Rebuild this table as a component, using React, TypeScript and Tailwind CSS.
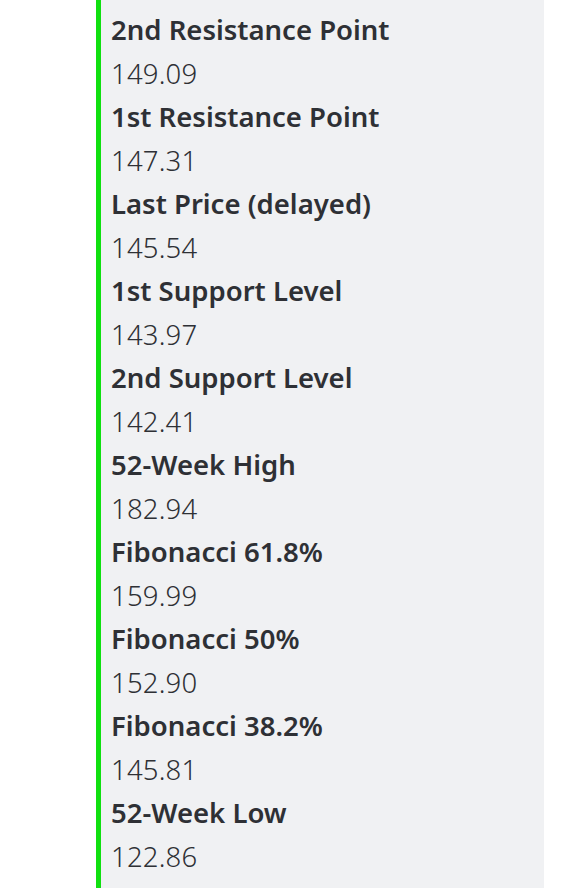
import React from "react";

const rows: [string, string][] = [
  ["2nd Resistance Point", "149.09"],
  ["1st Resistance Point", "147.31"],
  ["Last Price (delayed)", "145.54"],
  ["1st Support Level", "143.97"],
  ["2nd Support Level", "142.41"],
  ["52-Week High", "182.94"],
  ["Fibonacci 61.8%", "159.99"],
  ["Fibonacci 50%", "152.90"],
  ["Fibonacci 38.2%", "145.81"],
  ["52-Week Low", "122.86"],
];

export default function App() {
  return (
    <div className="w-[562px] h-[888px] bg-white overflow-hidden" style={{ fontFamily: "'Noto Sans', sans-serif" }}>
      <div className="ml-[96px] w-[448px] h-[888px] border-l-[5px] border-[#10e010] bg-[#f0f1f3] pl-[10px] pt-[8px] text-[#2e3035]">
        {rows.map(([label, value]) => (
          <div key={label} className="flex flex-col">
            <div className="text-[27.5px] leading-[43.5px] font-semibold">{label}</div>
            <div className="text-[27.5px] leading-[43.5px] font-light tracking-[0.2px]">{value}</div>
          </div>
        ))}
      </div>
    </div>
  );
}
